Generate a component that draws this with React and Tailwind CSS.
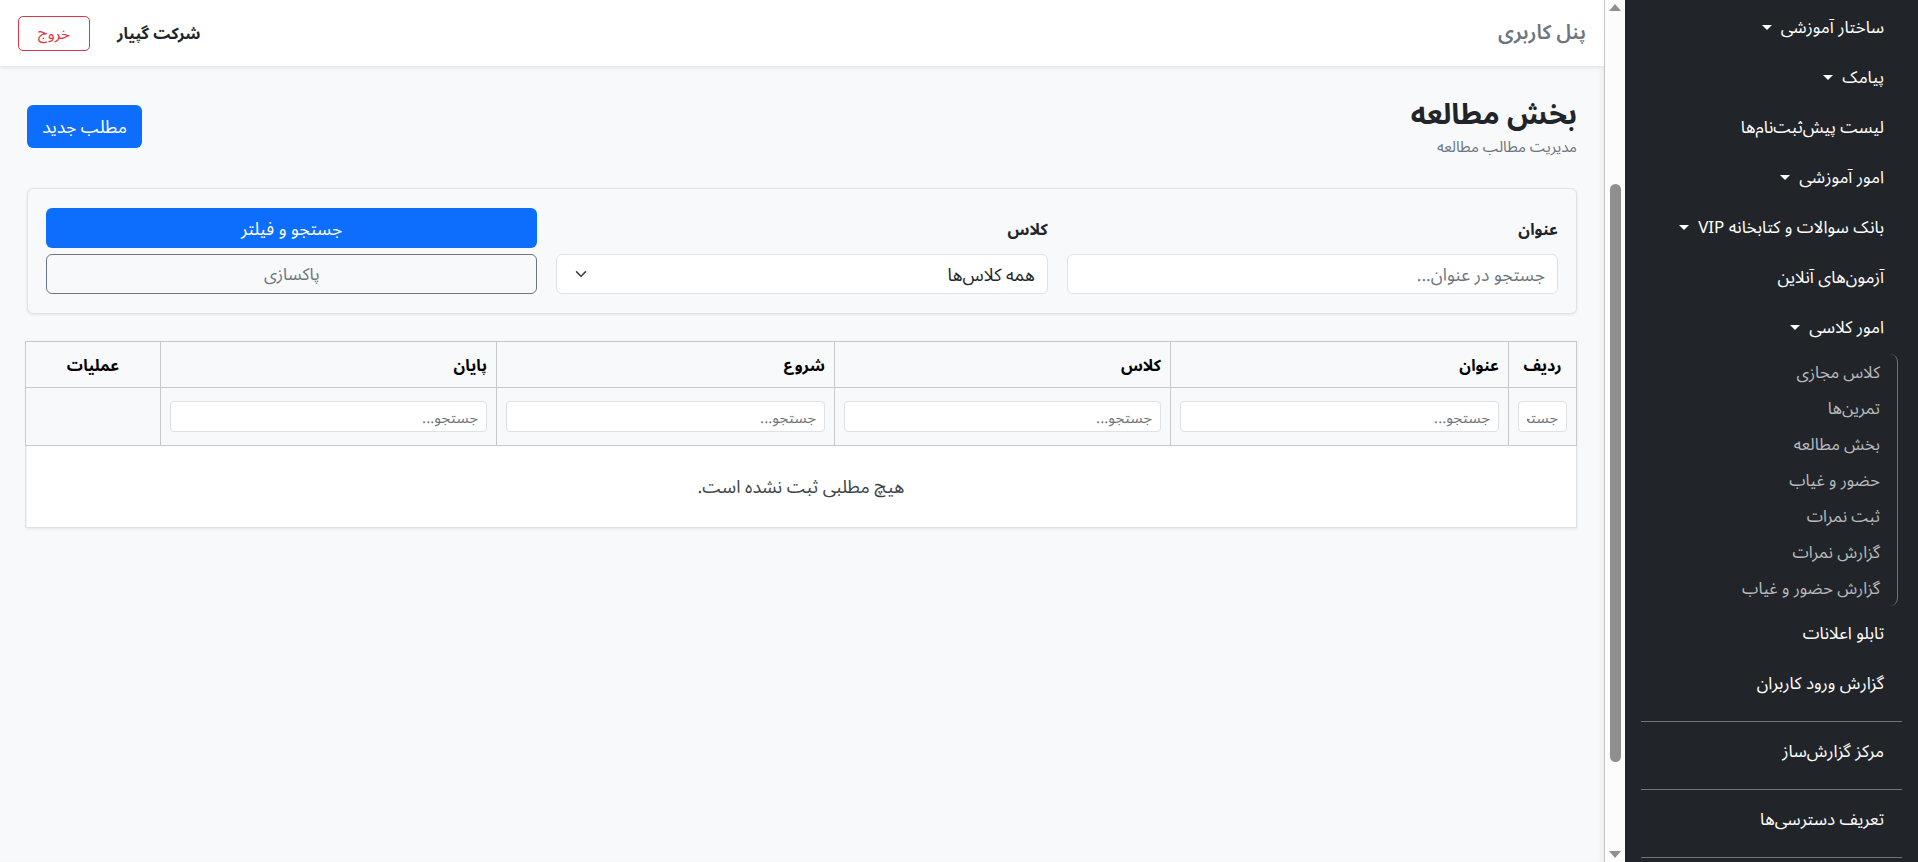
import React from "react";

const FONT =
  "font-['Segoe_UI','Noto_Sans_Arabic_UI','Noto_Sans_Arabic',system-ui,Roboto,'Noto_Sans','Liberation_Sans',Arial,sans-serif]";

function Caret() {
  return (
    <span className="inline-block w-0 h-0 border-t-[5px] border-t-white border-x-[5px] border-x-transparent" />
  );
}

function NavItem({ label, caret }) {
  return (
    <div className="flex items-center gap-[9px] h-[50px] px-[18px] text-white text-[17px] leading-[24px] whitespace-nowrap">
      <span>{label}</span>
      {caret && <Caret />}
    </div>
  );
}

function SubItem({ label }) {
  return (
    <div className="flex items-center h-[36px] pr-[17px] text-[16.5px] leading-[22px] text-[#b8bbbe] whitespace-nowrap">
      {label}
    </div>
  );
}

function ScrollStrip() {
  return (
    <div className="relative w-[20px] shrink-0 h-full bg-[#fcfcfc]">
      <span className="absolute top-[4px] left-[4px] w-0 h-0 border-b-[7px] border-b-[#8f8f8f] border-x-[6px] border-x-transparent" />
      <span className="absolute top-[184px] left-[5px] w-[11px] h-[578px] rounded-full bg-[#8f8f8f]" />
      <span className="absolute bottom-[4px] left-[4px] w-0 h-0 border-t-[7px] border-t-[#8f8f8f] border-x-[6px] border-x-transparent" />
    </div>
  );
}

function Sidebar() {
  return (
    <aside dir="rtl" className="w-[313px] shrink-0 h-full flex bg-[#212529]">
      <div className="flex-1 min-w-0 h-full overflow-hidden px-[16px] pt-[2px]">
        <NavItem label="ساختار آموزشی" caret />
        <NavItem label="پیامک" caret />
        <NavItem label="لیست پیش‌ثبت‌نام‌ها" />
        <NavItem label="امور آموزشی" caret />
        <NavItem label="بانک سوالات و کتابخانه VIP" caret />
        <NavItem label="آزمون‌های آنلاین" />
        <NavItem label="امور کلاسی" caret />
        <div className="mr-[4px] my-[2px] border-r border-[#6c757d] rounded-r-[8px]">
          <SubItem label="کلاس مجازی" />
          <SubItem label="تمرین‌ها" />
          <SubItem label="بخش مطالعه" />
          <SubItem label="حضور و غیاب" />
          <SubItem label="ثبت نمرات" />
          <SubItem label="گزارش نمرات" />
          <SubItem label="گزارش حضور و غیاب" />
        </div>
        <NavItem label="تابلو اعلانات" />
        <NavItem label="گزارش ورود کاربران" />
        <div className="mt-[13px] mb-[4px] border-t border-[#6c757d]" />
        <NavItem label="مرکز گزارش‌ساز" />
        <div className="mt-[13px] mb-[4px] border-t border-[#6c757d]" />
        <NavItem label="تعریف دسترسی‌ها" />
        <div className="mt-[13px] mb-[4px] border-t border-[#6c757d]" />
      </div>
      <ScrollStrip />
    </aside>
  );
}

function Chevron() {
  return (
    <svg width="16" height="12" viewBox="0 0 16 16" className="absolute left-[16px] top-1/2 -translate-y-1/2">
      <path d="m2 5 6 6 6-6" fill="none" stroke="#343a40" strokeWidth="2" strokeLinecap="round" strokeLinejoin="round" />
    </svg>
  );
}

function FilterInput() {
  return (
    <input
      placeholder="جستجو..."
      className="w-full h-[31px] px-[8px] rounded-[4px] border border-[#dee2e6] bg-white text-[15px] placeholder:text-[#6c757d] outline-none"
    />
  );
}

function Main() {
  const cols = [
    { label: "ردیف", w: "w-[68px]", center: true, input: true },
    { label: "عنوان", w: "w-[338px]", input: true },
    { label: "کلاس", w: "w-[336px]", input: true },
    { label: "شروع", w: "w-[338px]", input: true },
    { label: "پایان", w: "w-[336px]", input: true },
    { label: "عملیات", w: "w-[135px]", center: true, input: false },
  ];
  return (
    <main className="flex-1 min-w-0 h-full bg-[#f8f9fa] border-r border-[#c4c4c4] shadow-[inset_-5px_0_6px_-4px_rgba(0,0,0,0.07)] overflow-hidden">
      <header className="h-[66px] bg-white shadow-[0_2px_4px_rgba(0,0,0,0.08)] flex items-center justify-between px-[18px] relative">
        <div className="text-[20px] font-semibold text-[#6c757d] pb-[2px]">پنل کاربری</div>
        <div className="flex items-center gap-[27px]">
          <div className="text-[16px] font-bold text-[#212529]">شرکت گپیار</div>
          <button className="w-[72px] h-[35px] rounded-[5px] border border-[#dc3545] text-[#dc3545] text-[15.5px] leading-[20px] flex items-center justify-center">
            خروج
          </button>
        </div>
      </header>

      <div className="px-[27px] pt-[29px]">
        <div className="flex items-center justify-between">
          <div>
            <h3 className="text-[29px] leading-[35px] font-bold text-[#212529] mb-[6px]">بخش مطالعه</h3>
            <div className="text-[15px] leading-[21px] text-[#6c757d]">مدیریت مطالب مطالعه</div>
          </div>
          <button className="w-[115px] h-[43px] rounded-[6px] bg-[#0d6efd] text-white text-[17.5px] leading-[24px] flex items-center justify-center">
            مطلب جدید
          </button>
        </div>

        <div className="mt-[31px] border border-[#dee2e6] rounded-[6px] bg-[#f8f9fa] shadow-[0_1px_3px_rgba(0,0,0,0.08)] px-[18px] py-[19px]">
          <div className="grid grid-cols-3 gap-[19px] items-end">
            <div className="flex flex-col">
              <label className="text-[16px] font-bold text-[#212529] leading-[24px] mb-[13px]">عنوان</label>
              <input
                placeholder="جستجو در عنوان..."
                className="h-[40px] px-[12px] rounded-[6px] border border-[#dee2e6] bg-white text-[17.5px] placeholder:text-[#6c757d] outline-none"
              />
            </div>
            <div className="flex flex-col">
              <label className="text-[16px] font-bold text-[#212529] leading-[24px] mb-[13px]">کلاس</label>
              <div className="relative h-[40px] px-[12px] rounded-[6px] border border-[#dee2e6] bg-white text-[17.5px] leading-[24px] text-[#212529] flex items-center">
                همه کلاس‌ها
                <Chevron />
              </div>
            </div>
            <div className="flex flex-col gap-[6px]">
              <button className="h-[40px] rounded-[6px] bg-[#0d6efd] text-white text-[17.5px] leading-[24px]">جستجو و فیلتر</button>
              <button className="h-[40px] rounded-[6px] border border-[#6c757d] text-[#6c757d] text-[17px] leading-[24px]">پاکسازی</button>
            </div>
          </div>
        </div>

        <div className="mt-[27px] shadow-[0_1px_3px_rgba(0,0,0,0.08)] bg-white">
          <table className="w-full border-collapse table-fixed">
            <thead>
              <tr className="bg-[#f8f9fa]">
                {cols.map((c) => (
                  <th
                    key={c.label}
                    className={`${c.w} h-[46px] border border-[#c8c9ca] px-[9px] text-[16px] font-bold text-[#000] ${c.center ? "text-center" : "text-right"}`}
                  >
                    {c.label}
                  </th>
                ))}
              </tr>
              <tr className="bg-[#f8f9fa]">
                {cols.map((c) => (
                  <th key={c.label} className="h-[58px] border border-[#c8c9ca] px-[9px] font-normal">
                    {c.input ? <FilterInput /> : null}
                  </th>
                ))}
              </tr>
            </thead>
            <tbody>
              <tr>
                <td colSpan={6} className="h-[82px] border border-[#dee2e6] text-center text-[18px] text-[#3d4349]">
                  هیچ مطلبی ثبت نشده است.
                </td>
              </tr>
            </tbody>
          </table>
        </div>
      </div>
    </main>
  );
}

export default function App() {
  return (
    <div dir="rtl" className={`${FONT} w-[1918px] h-[862px] flex overflow-hidden`}>
      <Sidebar />
      <Main />
    </div>
  );
}
